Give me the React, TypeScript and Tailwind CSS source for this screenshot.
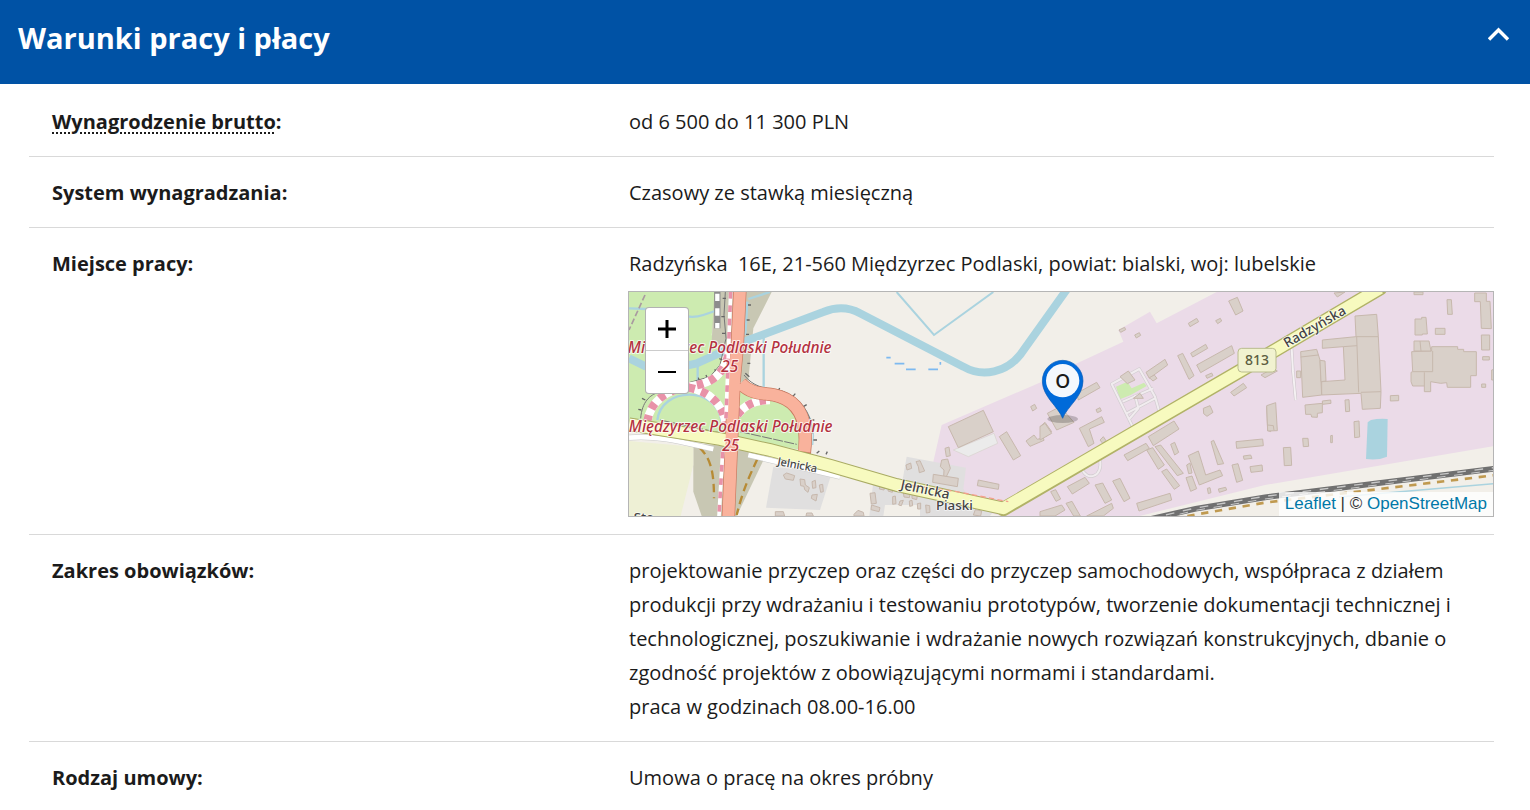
import React, { useState } from "react";

const buildingsPiaski = [
  "M355 425L460 376L490 440L385 488Z",
  "M508 455L530 440L572 512L550 525Z",
  "M588 468L612 450L622 463L640 458L642 466L600 484Z",
  "M630 425L645 412L665 440L648 455Z",
  "M602 365L614 358L620 370L608 378Z",
  "M345 490L357 486L361 512L349 515Z",
  "M335 525L353 522L361 550L349 575L341 574L342 555L331 545Z",
  "M310 568L385 580L382 605L308 592Z",
  "M228 540L242 534L245 550L231 555Z",
  "M258 530L270 527L284 558L268 563L265 545Z",
  "M445 585L507 598L505 613L442 602Z",
  "M120 625L135 623L139 655L124 657Z",
  "M125 660L150 668L147 680L123 674Z",
  "M188 635L196 633L198 656L188 658Z",
  "M210 648L220 646L214 662L206 660Z",
  "M238 648L246 646L248 662L239 664Z",
  "M262 656L272 654L272 672L263 672Z",
  "M287 660L299 662L300 682L289 684Z",
  "M150 602L164 605L162 615L148 612Z",
  "M176 606L190 610L187 622L174 618Z",
  "M220 622L240 626L238 638L222 636Z",
  "M246 628L262 632L260 644L246 640Z",
  "M72 688L84 676L100 682L102 693L72 693Z",
  "M436 674L455 678L452 693L430 690Z",
];

const buildingsIndustrial = [
  "M110 325L170 292L180 308L115 345Z",
  "M22 385L60 365L102 412L50 435Z",
  "M0 425L15 415L35 445L0 465Z",
  "M168 374L180 368L184 378L172 383Z",
  "M118 430L185 395L193 412L148 432L162 475L145 485Z",
  "M180 465L190 455L198 467L188 475Z",
  "M240 275L265 258L285 285L262 296Z",
  "M318 262L375 223L383 240L328 280Z",
  "M328 278L343 270L351 280L339 288Z",
  "M413 212L428 205L462 272L447 283Z",
  "M452 205L497 178L503 190L458 216Z",
  "M470 240L575 182L583 205L482 263Z",
  "M497 272L515 264L519 272L501 280Z",
  "M566 48L592 37L609 78L587 90Z",
  "M445 115L470 100L476 110L450 125Z",
  "M527 107L541 100L545 108L533 116Z",
  "M237 135L254 127L257 134L242 142Z",
  "M284 150L298 143L302 151L289 159Z",
  "M572 322L610 295L620 308L582 333Z",
  "M490 370L510 362L519 382L501 394L491 386Z",
  "M325 455L402 408L417 432L340 482Z",
  "M252 510L318 475L328 490L263 527Z",
  "M320 495L338 488L373 540L355 553Z",
  "M345 485L362 480L430 565L412 572Z",
  "M392 478L404 472L416 502L404 510Z",
  "M365 560L380 552L419 602L403 613Z",
  "M445 512L475 498L497 570L540 555L548 572L478 600Z",
  "M438 578L456 573L470 611L452 619Z",
  "M440 540L450 534L456 564L446 566Z",
  "M513 470L521 466L551 536L533 539Z",
  "M588 470L668 462L670 482L590 490Z",
  "M610 513L632 510L636 520L612 523Z",
  "M630 545L666 540L668 558L633 562Z",
  "M576 540L594 536L608 586L590 592Z",
  "M502 610L510 608L513 623L505 626Z",
  "M535 612L557 607L560 615L538 622Z",
  "M290 655L390 625L395 645L297 678Z",
  "M165 600L188 594L215 645L195 655Z",
  "M218 588L240 580L270 640L252 650Z",
  "M82 605L135 577L148 595L97 627Z",
  "M32 620L47 614L62 642L48 649Z",
  "M78 655L96 649L121 693L101 693Z",
  "M0 680L65 660L75 675L45 693L0 693Z",
  "M140 693L215 655L220 670L190 693Z",
  "M680 365L692 360L692 440L683 436Z",
  "M663 270L700 250L712 258L675 278Z",
  "M280 340L300 325L310 340Z",
];

const buildingsFactory = [
  "M270 93L335 88L340 155L348 320L346 370L292 373L288 325L170 330L170 290L240 285L235 185L172 190L172 165L273 155Z",
  "M273 155L340 155M275 155L281 322M288 322L348 320",
  "M107 200L155 193L165 225L170 330L113 337Z",
  "M107 216L160 210M235 185L276 182",
  "M165 226L180 228L183 288L168 290Z",
  "M95 258L107 258L107 278L95 278Z",
  "M120 360L172 355L172 383L157 385L157 397L140 396L138 388L122 388Z",
  "M172 348L197 345L198 355L173 358Z",
  "M240 345L252 344L254 379L242 380Z",
  "M267 410L282 408L284 456L269 458Z",
  "M376 332L401 331L401 347L376 348Z",
  "M5 362L32 353L37 437L8 438Z",
  "M8 420L25 422L27 437",
  "M55 488L77 487L80 541L58 542Z",
  "M113 460L129 460L131 484L115 485Z",
  "M197 452L202 451L202 473L197 473Z",
  "M440 200L500 198L500 185L578 185L578 193L596 193L596 200L634 200L634 272L617 272L617 307L547 307L545 293L527 295L497 290L497 320L478 320L478 303L443 303L438 290L438 262L443 260Z",
  "M443 260L503 260L503 198M478 262L478 303",
  "M447 168L492 168L498 198L447 198ZM465 168L468 198",
  "M450 102L470 102L470 97L483 97L487 147L472 147L472 150L450 150Z",
  "M511 130L540 130L540 148L511 148Z",
  "M546 44L559 44L562 88L548 88Z",
  "M629 24L664 24L664 49L675 49L679 131L649 130L646 50L629 50Z",
  "M649 150L674 150L674 195L650 195Z",
  "M653 215L673 215L673 225L653 225Z",
  "M680 255L690 252L690 285L680 285Z",
  "M650 297L662 297L662 307L650 307Z",
  "M207 24L240 21L217 36Z",
  "M447 21L474 21L474 29L447 29Z",
];

const buildingsJelnicka = [
  "M490 570L500 564L524 572L520 586L496 582Z",
  "M540 582L554 584L556 600L568 608L564 622L554 614L552 604L542 602Z",
  "M576 590L586 586L588 608L578 610Z",
  "M598 600L608 598L610 620L602 622Z",
  "M576 630L592 628L588 648L574 640Z",
  "M466 680L490 680L494 693L466 693Z",
  "M560 684L576 684L580 693L558 693Z",
];

const slipRoads =
  "M82 410C92 345 140 314 215 303C275 295 312 270 328 200M205 308C265 318 310 355 318 420M352 390C372 362 405 345 450 345";

const Buildings = ({ shapes }: { shapes: string[] }) => (
  <g fill="#d9d0c9" stroke="#c7b8ad" strokeWidth="3">
    {shapes.map((d) => (
      <path key={d} d={d} />
    ))}
  </g>
);

const MapDrawing = () => (
  <svg
    viewBox="0 0 2592 672"
    preserveAspectRatio="xMidYMid slice"
    className="block h-full w-full"
    role="img"
    aria-label="Mapa miejsca pracy"
  >
    <rect width="2595" height="675" fill="#f2efe9" />

    {/* land use */}
    <path
      d="M913 509L938 399L1263 259L1333 219L1483 149L1468 114L1563 59L1583 94L1763 0H2595V462L1908 579L1520 675H1130L990 640Z"
      fill="#ebdbe8"
    />
    <g transform="translate(-27 -21)">
      <path d="M27 21H290L275 150L300 210L345 290L335 470L27 410Z" fill="#cdebb0" />
      <path d="M283 21H455L400 130L385 285L330 300L335 200L275 170Z" fill="#c8c7b3" />
      <path d="M220 475V620L245 693H350L432 522L350 485Z" fill="#c8c7b3" />
      <path d="M27 468L220 485V540L182 693H27Z" fill="#eef0d5" />
      <path d="M362 300L400 335L500 360L550 430L545 495L350 460Z" fill="#cdebb0" />
      <path d="M460 545L635 565L600 675L438 668Z" fill="#e0dfdf" />
    </g>
    <g transform="translate(603 -21)">
      <path d="M230 515L408 548L400 612L420 640L490 680L480 693H270V660H165L160 693H118L130 590L215 600Z" fill="#e0dfdf" />
      <path d="M370 495L492 445L503 475L415 515Z" fill="#ebebeb" stroke="#d6d2cc" strokeWidth="2" />
    </g>

    {/* water */}
    <g fill="none" stroke="#aad3df">
      <path d="M0 199L48 222L120 232L203 214L358 144L583 60C613 48 653 42 693 64L1003 224C1063 259 1133 239 1173 189L1323 -21" strokeWidth="24" />
      <path d="M803 0L915 129L1093 0" strokeWidth="6" />
      <g transform="translate(-27 -21)" strokeWidth="7">
        <path d="M431 150V312M233 240V300" />
        <path d="M27 70L80 72M190 92Q220 100 250 90L285 78M385 42L450 21M382 50L376 150" />
        <path d="M112 405C125 305 290 300 305 410" />
        <path d="M480 330C550 345 590 400 578 480" strokeWidth="4" />
      </g>
      <path d="M2130 615L2595 575" strokeWidth="5" />
    </g>
    <path d="M772 197h13M797 215h29M831 232h29M898 232h29M934 210v8" stroke="#7db9f0" strokeWidth="5" />
    <path d="M2226 384Q2248 379 2276 381L2274 494Q2248 506 2211 501L2216 391Z" fill="#aad3df" />

    <g transform="translate(-27 -21)">
      <Buildings shapes={buildingsJelnicka} />
    </g>
    <g transform="translate(603 -21)">
      <Buildings shapes={buildingsPiaski} />
    </g>
    <g transform="translate(1233 -21)">
      <path d="M228 305L262 290L275 310L312 293L320 303L272 330L240 343Z" fill="#cdebb0" />
      <g fill="none" strokeLinejoin="round">
        <path d="M278 425L215 297L298 252L320 290L345 335L358 380M248 350L340 310M260 385L345 340M285 330L295 370L265 405" stroke="#d2cdd0" strokeWidth="10" />
        <path d="M278 425L215 297L298 252L320 290L345 335L358 380M248 350L340 310M260 385L345 340M285 330L295 370L265 405" stroke="#f1ecef" strokeWidth="6" />
        <path d="M125 550C140 592 190 575 180 525" stroke="#d2cdd0" strokeWidth="10" />
        <path d="M125 550C140 592 190 575 180 525" stroke="#f1ecef" strokeWidth="6" />
      </g>
      <Buildings shapes={buildingsIndustrial} />
    </g>
    <g transform="translate(1908 -21)">
      <path d="M80 190L84 260L92 345" fill="none" stroke="#cbc5c9" strokeWidth="9" />
      <path d="M80 190L84 260L92 345" fill="none" stroke="#f4f0f2" strokeWidth="6" />
      <Buildings shapes={buildingsFactory} />
    </g>

    {/* railways */}
    <g fill="none">
      <path d="M1560 682L1700 650L1908 616L2595 530" stroke="#707070" strokeWidth="17" />
      <path d="M1560 680L1700 648L1908 613L2595 527" stroke="#c9c9c9" strokeWidth="4" strokeDasharray="26 26" />
      <path d="M1570 686L1700 655L1908 621L2595 535" stroke="#c9c9c9" strokeWidth="3" strokeDasharray="26 26" strokeDashoffset="20" />
      <path d="M1675 672L1908 632L2595 550" stroke="#c09a50" strokeWidth="8" strokeDasharray="22 20" />
    </g>

    <g transform="translate(-27 -21)" fill="none">
      {/* tracks and embankments */}
      <path d="M292 21V130" stroke="#8c8c8c" strokeWidth="19" />
      <path d="M292 26V130" stroke="#fff" strokeWidth="13" strokeDasharray="22 22" />
      <path d="M75 30L27 135" stroke="#a99aa0" strokeWidth="5" strokeDasharray="18 8" />
      <path d="M316 21L312 90L318 160L300 240L270 275L210 292M62 400C66 350 90 330 115 322" stroke="#777" strokeWidth="3" />
      <path d="M318 40h-10M314 95h-10M316 145h-10M308 225l-10-4M290 262l-6-9M262 280l-4-10M238 288l-3-10M76 345l-10-5M64 375l-9-2M384 60h9M380 105h9M378 148h9M382 235h9M376 265l12 10M430 320l6-10M475 318l4-9M518 335l8-9M550 365l10-6M572 405h11M580 465h11M590 505l8-7M618 508l4-8" stroke="#666" strokeWidth="4" />
      <path d="M372 270C400 305 430 310 475 315C535 330 575 380 578 445" stroke="#777" strokeWidth="3" />
      <path d="M120 405L330 450M360 440L530 478" stroke="#777" strokeWidth="3" strokeDasharray="30 4" />
      <path d="M238 488C275 520 282 570 282 640M412 522C390 570 370 610 350 690" stroke="#b78b35" strokeWidth="7" strokeDasharray="26 14" />

      {/* side road */}
      <path d="M27 458C120 450 200 475 280 492M385 510L660 575" stroke="#c9c9c9" strokeWidth="17" />
      <path d="M27 458C120 450 200 475 280 492M385 510L660 575" stroke="#fff" strokeWidth="14" />

      {/* slip roads under construction */}
      <path d={slipRoads} stroke="#fff" strokeWidth="25" />
      <path d={slipRoads} stroke="#e892a8" strokeWidth="25" strokeDasharray="20 20" />

      {/* trunk and main roads */}
      <path d="M360 10L352 180L342 290L325 700M362 295C400 335 440 320 480 335C540 355 565 410 553 505" stroke="#c9795f" strokeWidth="40" />
      <path d="M27 418L300 462L450 495L630 542L830 600L1150 670" stroke="#a9ab63" strokeWidth="41" />
      <path d="M1150 672L1860 258L2280 10" stroke="#b1b267" strokeWidth="43" strokeLinecap="round" />
      <path d="M27 418L300 462L450 495L630 542L830 600L1150 670L1860 258L2280 10" stroke="#f7fabf" strokeWidth="35" strokeLinejoin="round" />
      <path d="M850 598L1010 620L1165 650" stroke="#f5a08c" strokeWidth="4" strokeDasharray="16 10" />
      <path d="M360 10L352 180L342 290L325 700M362 295C400 335 440 320 480 335C540 355 565 410 553 500" stroke="#f9b29c" strokeWidth="36" />
      <path d="M332 21L326 180L318 400M308 500L297 693" stroke="#fff" strokeWidth="11" />
      <path d="M332 21L326 180L318 400M308 500L297 693" stroke="#e892a8" strokeWidth="11" strokeDasharray="20 20" />
    </g>

    {/* road number */}
    <rect x="1827" y="169" width="114" height="71" rx="11" fill="#f1f2d0" stroke="#b9bc8e" strokeWidth="3" />
    <g fontFamily="'Noto Sans', sans-serif" textAnchor="middle" paintOrder="stroke" strokeLinejoin="round">
      <text x="1884" y="219" fontSize="42" fontWeight="500" fill="#5c5d40">813</text>

      <g fontSize="46" fontStyle="italic" fontWeight="500" fill="#b4313f" stroke="#fff" strokeWidth="6" strokeOpacity="0.75">
        <text x="302" y="184">Międzyrzec Podlaski Południe</text>
        <text x="302" y="239">25</text>
        <text x="305" y="420">Międzyrzec Podlaski Południe</text>
        <text x="305" y="476">25</text>
      </g>

      <g fill="#444" stroke="#fff" strokeWidth="5" strokeOpacity="0.7" fontWeight="500">
        <text x="503" y="530" fontSize="33" transform="rotate(11 503 530)">Jelnicka</text>
        <text x="886" y="606" fontSize="41" transform="rotate(12 886 606)">Jelnicka</text>
        <text x="976" y="654" fontSize="40">Piaski</text>
        <text x="2064" y="116" fontSize="41" transform="rotate(-30 2064 116)">Radzyńska</text>
        <text x="14" y="690" fontSize="40" textAnchor="start">Sto</text>
      </g>
    </g>

    {/* marker */}
    <g transform="translate(1233 -21)">
      <ellipse cx="68" cy="402" rx="46" ry="12" fill="#000" fillOpacity="0.2" />
      <path d="M68 400C55 365 7 335 7 288A61 62 0 0 1 129 288C129 335 81 365 68 400Z" fill="#006ad9" stroke="#0a5cb5" strokeWidth="2" />
      <circle cx="68" cy="287" r="50" fill="#f4f8fd" />
      <text x="68" y="309" fontFamily="'Open Sans', sans-serif" fontSize="57" fontWeight="600" textAnchor="middle" fill="#1b1b1b">O</text>
    </g>
  </svg>
);

const JobMap = () => (
  <div className="relative -ml-px mt-[10px] h-[226px] overflow-hidden border border-[#b5b5b5] font-['Liberation_Sans',Arial,sans-serif]">
    <MapDrawing />
    <div className="absolute left-4 top-[15px] w-11 divide-y divide-[#cccccc] overflow-hidden rounded border border-black/30 bg-white text-black">
      <button type="button" aria-label="Przybliż" className="flex h-[43px] w-full items-center justify-center">
        <svg width="18" height="18" viewBox="0 0 18 18" stroke="currentColor" strokeWidth="3">
          <path d="M0 9H18M9 0V18" />
        </svg>
      </button>
      <button type="button" aria-label="Oddal" className="flex h-[42px] w-full items-center justify-center">
        <svg width="18" height="18" viewBox="0 0 18 18" stroke="currentColor" strokeWidth="2">
          <path d="M0 9H18" />
        </svg>
      </button>
    </div>
    <div className="absolute bottom-0 right-0 bg-white/80 px-[6px] text-[17px] leading-6 text-[#333333]">
      <a href="#leaflet" className="text-[#0078a8]">Leaflet</a> | ©{" "}
      <a href="#osm" className="text-[#0078a8]">OpenStreetMap</a>
    </div>
  </div>
);

type RowProps = {
  label: React.ReactNode;
  children: React.ReactNode;
};

const Row = ({ label, children }: RowProps) => (
  <div className="grid grid-cols-[600fr_865fr] border-b border-[#d9d9d9] pb-[17px] pt-[19px]">
    <dt className="pl-[23px] font-bold">{label}</dt>
    <dd>{children}</dd>
  </div>
);

const App: React.FC = () => {
  const [open, setOpen] = useState(true);

  return (
    <section className="h-screen overflow-hidden bg-white font-['Open_Sans',sans-serif] text-[#1b1b1b]">
      <h2 className="bg-[#0052a5] text-white">
        <button
          type="button"
          aria-expanded={open}
          onClick={() => setOpen(!open)}
          className="flex h-[84px] w-full items-center justify-between pb-2 pl-[18px] pr-5 text-left text-[29px] font-bold"
        >
          Warunki pracy i płacy
          <svg
            width="22"
            height="14"
            viewBox="0 0 22 14"
            fill="none"
            stroke="currentColor"
            strokeWidth="3.4"
            className={open ? "mb-2" : "mb-2 rotate-180"}
          >
            <path d="M1 12.5L10.5 3L20 12.5" />
          </svg>
        </button>
      </h2>

      {open && (
        <dl className="ml-[29px] mr-9 pt-0.5 text-[20px] leading-[34px]">
          <Row
            label={
              <>
                <abbr
                  title="Wynagrodzenie brutto"
                  className="underline decoration-dotted decoration-2 underline-offset-3"
                >
                  Wynagrodzenie brutto
                </abbr>
                :
              </>
            }
          >
            od 6 500 do 11 300 PLN
          </Row>
          <Row label="System wynagradzania:">Czasowy ze stawką miesięczną</Row>
          <Row label="Miejsce pracy:">
            Radzyńska{"\u00a0 "}16E, 21-560 Międzyrzec Podlaski, powiat: bialski, woj: lubelskie
            <JobMap />
          </Row>
          <Row label="Zakres obowiązków:">
            projektowanie przyczep oraz części do przyczep samochodowych, współpraca z działem produkcji przy
            wdrażaniu i testowaniu prototypów, tworzenie dokumentacji technicznej i technologicznej, poszukiwanie i
            wdrażanie nowych rozwiązań konstrukcyjnych, dbanie o zgodność projektów z obowiązującymi normami i
            standardami.
            <br />
            praca w godzinach 08.00-16.00
          </Row>
          <Row label="Rodzaj umowy:">Umowa o pracę na okres próbny</Row>
        </dl>
      )}
    </section>
  );
};

export default App;
